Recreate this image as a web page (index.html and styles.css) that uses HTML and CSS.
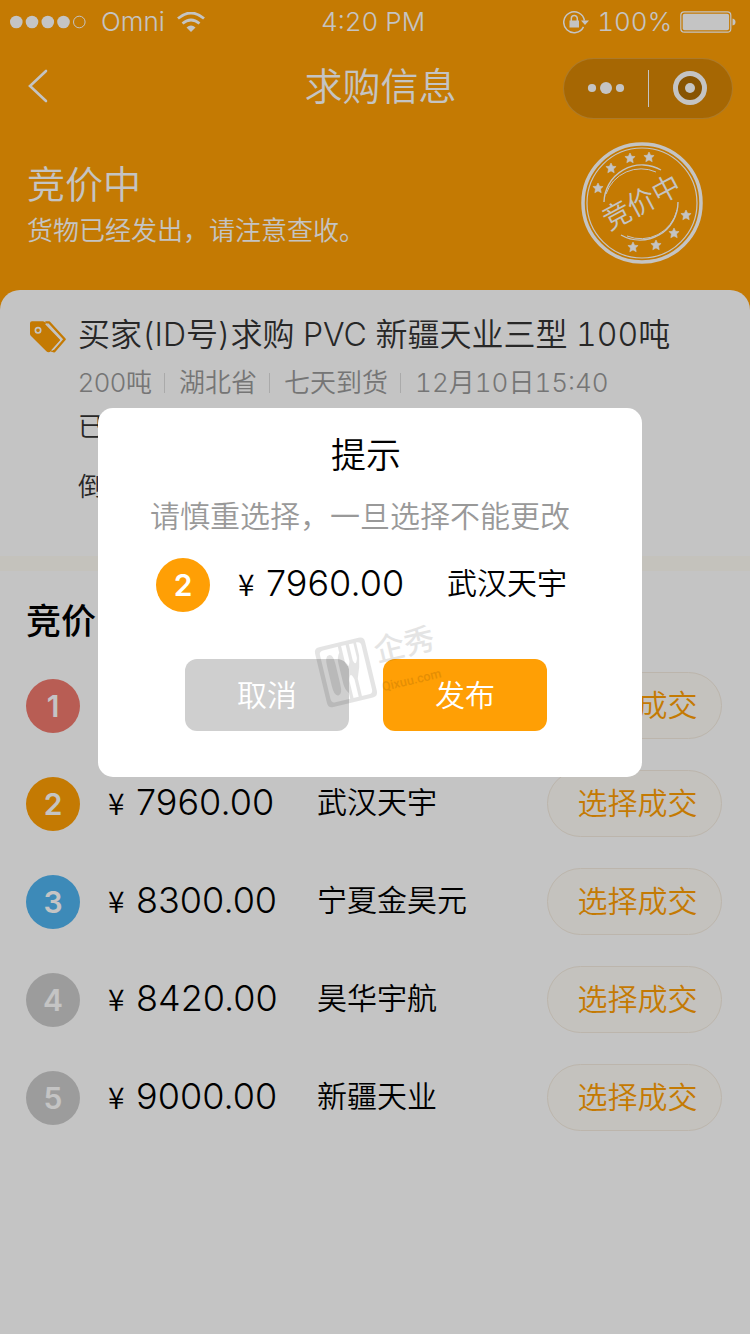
FILE: index.html
```html
<!DOCTYPE html>
<html lang="zh-CN">

<head>
	<meta charset="utf-8">
	<meta name="viewport" content="width=device-width, initial-scale=1">
	<title>求购信息</title>
	<link rel="stylesheet" href="styles.css">
</head>

<body>
	<!-- orange top: status bar, nav bar, bidding state -->
	<header class="top">
		<div class="status-bar">
			<div class="status-left">
				<svg width="77" height="14" viewBox="0 0 77 14" fill="#fff">
					<circle cx="6.3" cy="7" r="6.3" />
					<circle cx="22" cy="7" r="6.3" />
					<circle cx="37.8" cy="7" r="6.3" />
					<circle cx="53.5" cy="7" r="6.3" />
					<circle cx="69.3" cy="7" r="5.8" fill="none" stroke="#fff" />
				</svg>
				<span class="carrier">Omni</span>
				<svg width="28" height="20" viewBox="0 0 28 20" fill="none" stroke="#fff" stroke-width="2.8">
					<path d="M1 6.5Q14-4.500 27 6.500" />
					<path d="M5.500 11.500Q14 4.500 22.500 11.500" />
					<path d="M9.500 15.500Q14 11.500 18.500 15.500L14 20Z" fill="#fff" stroke="none" />
				</svg>
			</div>
			<span>4:20 PM</span>
			<div class="status-right">
				<svg width="26" height="24" viewBox="0 0 26 24" fill="none" stroke="#fff" stroke-width="1.500">
					<path d="M20.500 16.800A10.400 10.400 0 1 1 21.400 10.500" />
					<path d="M18 10.500H26L22 15Z" fill="#fff" stroke="none" />
					<rect x="6.500" y="10.500" width="9.500" height="7" fill="#fff" stroke="none" />
					<path d="M8.300 11V8.500a3 3 0 0 1 6 0V11" />
				</svg>
				<span>100%</span>
				<svg width="56" height="22" viewBox="0 0 56 22" fill="#fff">
					<rect x=".8" y=".8" width="50" height="20.400" rx="3.500" fill="none" stroke="#fff" stroke-width="1.200" />
					<rect x="2.700" y="2.700" width="46.400" height="16.600" rx="2" />
					<path d="M52.500 7.500Q55.500 8 55.500 11T52.500 14.500Z" />
				</svg>
			</div>
		</div>

		<nav class="nav-bar">
			<a href="#" class="back" aria-label="返回">
				<svg width="20" height="34" viewBox="0 0 20 34" fill="none" stroke="#fff" stroke-width="2.600" stroke-linecap="round">
					<path d="M18 2L2 17L18 32" />
				</svg>
			</a>
			<h1>求购信息</h1>
			<div class="capsule">
				<button type="button" aria-label="更多">
					<svg width="38" height="12" viewBox="0 0 38 12" fill="#fff">
						<circle cx="5" cy="6" r="4.100" />
						<circle cx="19" cy="6" r="6" />
						<circle cx="33" cy="6" r="4.100" />
					</svg>
				</button>
				<button type="button" aria-label="关闭">
					<svg width="34" height="34" viewBox="0 0 34 34">
						<circle cx="17" cy="17" r="14.500" fill="rgba(0,0,0,.18)" stroke="#fff" stroke-width="5" />
						<circle cx="17" cy="17" r="5" fill="#fff" />
					</svg>
				</button>
			</div>
		</nav>

		<div class="state">
			<div>
				<h2>竞价中</h2>
				<p>货物已经发出，请注意查收。</p>
			</div>
			<svg class="stamp" width="122" height="122" viewBox="0 0 122 122" fill="none" stroke="#fff">
				<defs>
					<path id="star" d="M0-5L1.600-1.700L5.100-1.500L2.500 1L3.200 4.700L0 2.900L-3.200 4.700L-2.500 1L-5.100-1.500L-1.600-1.700Z" fill="#fff" stroke="#fff" stroke-width=".6" />
				</defs>
				<circle cx="61" cy="61" r="59" stroke-width="3.500" />
				<circle cx="61" cy="61" r="55" stroke-width="1.200" />
				<path d="M23 60A38 38 0 0 1 80 28" stroke-width="1.400" />
				<path d="M25 52A37 37 0 0 1 75 30" />
				<path d="M97 60A38 38 0 0 1 40 93" stroke-width="1.400" />
				<path d="M96 68A37 37 0 0 1 46 94" />
				<use href="#star" x="17" y="46" />
				<use href="#star" x="30" y="26" />
				<use href="#star" x="49" y="16" />
				<use href="#star" x="68" y="15" />
				<use href="#star" x="105" y="73" />
				<use href="#star" x="93" y="91" />
				<use href="#star" x="75" y="103" />
				<use href="#star" x="52" y="105" />
				<text x="61" y="70" text-anchor="middle" transform="rotate(-28 61 61)" fill="#fff" stroke="none">竞价中</text>
			</svg>
		</div>
	</header>

	<main class="sheet">
		<section class="info">
			<svg class="tag" width="36" height="32" viewBox="0 0 108 94" fill="#ff9f05">
				<path d="M6 0H38Q42 0 45 3L88 50Q93 55 88 61L63 89Q56 96 49 90L3 44Q0 41 0 37V6Q0 0 6 0Z" />
				<circle cx="24" cy="27" r="8" fill="none" stroke="#fff" stroke-width="5" />
				<path d="M46 3H57L104 54L73 90L63 87" fill="none" stroke="#ff9f05" stroke-width="7" stroke-linejoin="round" />
				<path d="M47 7L94 56L65 88" fill="none" stroke="#fff" stroke-width="4" />
			</svg>
			<div class="info-text">
				<h2>买家(ID号)求购 PVC 新疆天业三型 100吨</h2>
				<ul class="meta">
					<li>200吨</li>
					<li>湖北省</li>
					<li>七天到货</li>
					<li class="time">12月10日15:40</li>
				</ul>
				<p>已</p>
				<p>倒</p>
			</div>
		</section>

		<section class="bids">
			<h2>竞价</h2>
			<ul>
				<li class="bid">
					<span class="rank red">1</span>
					<button type="button" class="pick">选择成交</button>
				</li>
				<li class="bid">
					<span class="rank orange">2</span>
					<span class="price"><small>¥</small>7960.00</span>
					<span class="company">武汉天宇</span>
					<button type="button" class="pick">选择成交</button>
				</li>
				<li class="bid">
					<span class="rank blue">3</span>
					<span class="price"><small>¥</small>8300.00</span>
					<span class="company">宁夏金昊元</span>
					<button type="button" class="pick">选择成交</button>
				</li>
				<li class="bid">
					<span class="rank">4</span>
					<span class="price"><small>¥</small>8420.00</span>
					<span class="company">昊华宇航</span>
					<button type="button" class="pick">选择成交</button>
				</li>
				<li class="bid">
					<span class="rank">5</span>
					<span class="price"><small>¥</small>9000.00</span>
					<span class="company">新疆天业</span>
					<button type="button" class="pick">选择成交</button>
				</li>
			</ul>
		</section>
	</main>

	<!-- confirm dialog -->
	<div class="mask">
		<div class="dialog" role="dialog" aria-labelledby="dialog-title">
			<h2 id="dialog-title">提示</h2>
			<p>请慎重选择，一旦选择不能更改</p>
			<div class="choice">
				<span class="rank orange">2</span>
				<span class="price"><small>¥</small>7960.00</span>
				<span class="company">武汉天宇</span>
			</div>
			<div class="actions">
				<button type="button" class="cancel">取消</button>
				<button type="button" class="submit">发布</button>
			</div>
			<svg class="watermark" width="140" height="100" viewBox="0 0 420 300" fill="#000">
				<g transform="translate(123 172) rotate(-13.5)">
					<path fill-rule="evenodd" d="M-61-92H61Q77-92 77-76V76Q77 92 61 92H-61Q-77 92-77 76V-76Q-77-92-61-92Z
						M-52-80Q-64-80-64-68V68Q-64 80-52 80H-6V62Q-16 50-16 30V-30Q-16-50-6-62V-80Z
						M4-80V-30Q10-4 18-30V-80Z M4 80V26Q12-4 20 26V80Z
						M28-80V-30Q34-8 42-34V-80Z M30 80V26Q44-4 50-40V-80H52Q64-80 64-68V68Q64 80 52 80Z" />
					<path d="M-38-62Q-25-62-25-30V30Q-25 62-38 62T-51 30V-30Q-51-62-38-62Z" />
				</g>
				<text class="mark-cn" transform="translate(216 142) rotate(-13.5)">企秀</text>
				<text class="mark-en" transform="translate(234 229) rotate(-13.5)">Qixuu.com</text>
			</svg>
		</div>
	</div>
</body>

</html>
```
FILE: styles.css
```css
* {
	box-sizing: border-box;
	margin: 0;
	padding: 0;
}

body {
	min-height: 100vh;
	background-color: #fff;
	font-family: Inter, "Noto Sans CJK SC", sans-serif;
	font-weight: 350;
	color: #000;
}

h1,
h2 {
	font-weight: 350;
}

ul {
	list-style: none;
}

button {
	border: 0;
	background: none;
	font: inherit;
	cursor: pointer;
}

svg {
	display: block;
	flex-shrink: 0;
}

/* top area */
.top {
	height: 310px;
	background-color: #ff9f05;
	color: #fff;
}

.status-bar {
	display: grid;
	grid-template-columns: 1fr auto 1fr;
	align-items: center;
	height: 44px;
	padding: 0 14px 0 10px;
	font-size: 26px;
	font-variant-numeric: tabular-nums;
	line-height: 44px;
}

.status-left,
.status-right {
	display: flex;
	align-items: center;
}

.carrier {
	margin: 0 12px 0 14px;
}

.status-right {
	justify-content: flex-end;
	gap: 8px;
}

.nav-bar {
	display: grid;
	grid-template-columns: 1fr auto 1fr;
	align-items: center;
	height: 88px;
	padding: 0 17px 0 28px;
}

.nav-bar h1 {
	padding-bottom: 4px;
	font-size: 38px;
	line-height: 50px;
}

.back {
	justify-self: start;
	padding-bottom: 4px;
}

.capsule {
	display: flex;
	justify-self: end;
	align-items: center;
	width: 170px;
	height: 61px;
	border: 1px solid rgba(255, 255, 255, .2);
	border-radius: 31px;
	background-color: rgba(0, 0, 0, .15);
}

.capsule button {
	display: flex;
	flex: 1;
	align-items: center;
	justify-content: center;
	height: 37px;
}

.capsule button + button {
	border-left: 1px solid #fff;
}

.state {
	display: flex;
	justify-content: space-between;
	padding: 10px 47px 0 27px;
}

.state h2 {
	margin-top: 15px;
	font-size: 38px;
	line-height: 54px;
}

.state p {
	margin-top: 2px;
	font-size: 26px;
	line-height: 36px;
}

.stamp text {
	font-size: 28px;
}

/* white sheet that slides over the orange */
.sheet {
	margin-top: -20px;
	border-radius: 20px 20px 0 0;
	background-color: #fff;
}

.info {
	display: flex;
	gap: 12px;
	height: 266px;
	padding: 22px 30px 0;
}

.tag {
	margin-top: 9px;
}

.info-text {
	color: #333;
	font-size: 26px;
}

.info-text h2 {
	font-size: 32px;
	font-variant-numeric: tabular-nums;
	line-height: 46px;
}

.meta {
	display: flex;
	align-items: center;
	height: 50px;
	color: #999;
}

.meta li {
	line-height: 20px;
}

.meta li + li {
	margin-left: 12px;
	padding-left: 14px;
	border-left: 1px solid #ddd;
}

.meta .time {
	font-variant-numeric: tabular-nums;
}

.info-text p {
	line-height: 38px;
}

.info-text p + p {
	margin-top: 22px;
}

/* bid list */
.bids {
	padding: 23px 28px 0 26px;
	border-top: 15px solid #fffdf5;
}

.bids h2 {
	margin-bottom: 24px;
	font-size: 35px;
	font-weight: 500;
	line-height: 54px;
}

.bid {
	display: flex;
	align-items: center;
	height: 67px;
	margin-bottom: 31px;
}

.rank {
	width: 54px;
	height: 54px;
	border-radius: 50%;
	background-color: #ccc;
	color: #fff;
	font-size: 30px;
	font-weight: 600;
	line-height: 54px;
	text-align: center;
}

.red {
	background-color: #f07a6e;
}

.orange {
	background-color: #ff9f05;
}

.blue {
	background-color: #50b4f0;
}

.price {
	width: 209px;
	margin-left: 28px;
	padding-bottom: 4px;
	font-size: 36px;
	line-height: 50px;
}

.price small {
	display: inline-block;
	width: 28px;
	font-family: "Noto Sans CJK SC", sans-serif;
	font-size: 30px;
	line-height: 30px;
}

.company {
	padding-bottom: 4px;
	font-size: 30px;
	line-height: 50px;
}

.pick {
	width: 175px;
	height: 67px;
	margin-left: auto;
	padding: 0 0 6px 6px;
	border: 1px solid #f5ece0;
	border-radius: 34px;
	background-color: #fffdf7;
	color: #ff9f05;
	font-size: 30px;
}

/* dialog */
.mask {
	position: fixed;
	inset: 0;
	padding: 408px 108px 0 98px;
	background-color: rgba(0, 0, 0, .23);
}

.dialog {
	position: relative;
	padding: 24px 28px 46px 20px;
	border-radius: 15px;
	background-color: #fff;
}

.dialog h2 {
	font-size: 35px;
	line-height: 46px;
	text-align: center;
}

.dialog p {
	margin-top: 18px;
	padding-left: 32px;
	color: #999;
	font-size: 30px;
	line-height: 40px;
}

.choice {
	display: flex;
	align-items: center;
	margin-top: 22px;
	padding-left: 38px;
}

.actions {
	display: flex;
	justify-content: center;
	gap: 34px;
	margin-top: 47px;
}

.actions button {
	width: 164px;
	height: 72px;
	padding-bottom: 4px;
	border-radius: 12px;
	color: #fff;
	font-size: 30px;
}

.actions .cancel {
	background-color: #cfcfcf;
}

.actions .submit {
	background-color: #ff9f05;
}

.watermark {
	position: absolute;
	top: 207px;
	left: 207px;
	opacity: .1;
	pointer-events: none;
}

.mark-cn {
	font-size: 92px;
	font-weight: 500;
}

.mark-en {
	font-family: Roboto, sans-serif;
	font-size: 38px;
	font-weight: 500;
}
```
